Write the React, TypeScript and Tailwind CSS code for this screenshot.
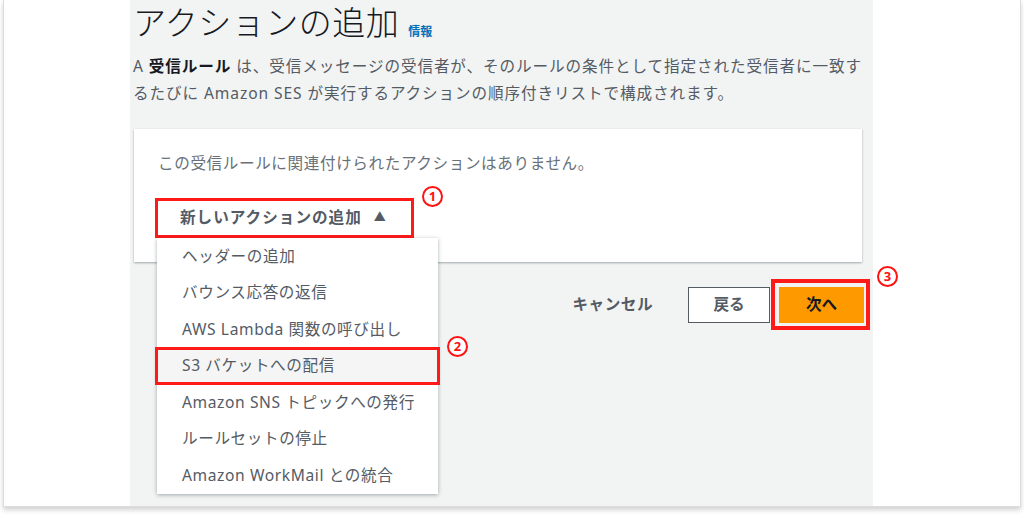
import React from "react";

const font = { fontFamily: '"Noto Sans", "Noto Sans CJK JP", sans-serif' };

function Circled({ n }: { n: string }) {
  return (
    <div className="flex h-[21px] w-[21px] items-center justify-center rounded-full border-[2px] border-[#ff1111] bg-white text-[13px] font-bold leading-none text-[#ff1111]">
      {n}
    </div>
  );
}

const items = [
  "ヘッダーの追加",
  "バウンス応答の返信",
  "AWS Lambda 関数の呼び出し",
  "S3 バケットへの配信",
  "Amazon SNS トピックへの発行",
  "ルールセットの停止",
  "Amazon WorkMail との統合",
];

export default function App() {
  return (
    <div className="h-[514px] w-[1024px] bg-white" style={font}>
      <div className="ml-[3px] flex h-[507px] w-[1018px] border border-t-0 border-[#dcdcdc] bg-white shadow-[0_3px_5px_rgba(0,0,0,0.18)]">
        <div className="w-[126px] shrink-0" />
        <div className="relative w-[743px] shrink-0 bg-[#f2f3f3] pl-[3px]">
          <div className="flex items-end pt-[3px]">
            <h1 className="text-[33px] font-light leading-[40px] tracking-[0.5px] text-[#16191f]">アクションの追加</h1>
            <a className="mb-[2px] ml-[9px] text-[12px] font-bold text-[#0073bb]">情報</a>
          </div>
          <div className="mt-[10px] w-[740px] whitespace-nowrap text-[15.6px] leading-[27px] tracking-[0.9px] text-[#545b64]">
            <div>
              A <b className="font-bold text-[#16191f]">受信ルール</b> は、受信メッセージの受信者が、そのルールの条件として指定された受信者に一致す
            </div>
            <div>るたびに Amazon SES が実行するアクションの順序付きリストで構成されます。</div>
          </div>
          <div className="relative ml-[1px] mt-[22px] h-[133px] w-[728px] bg-white shadow-[0_1px_2px_rgba(0,28,36,0.35)]">
            <p className="pl-[24px] pt-[22px] text-[15.6px] leading-[24px] tracking-[0.6px] text-[#687078]">この受信ルールに関連付けられたアクションはありません。</p>
            <div className="relative ml-[21px] mt-[23px] flex h-[40px] w-[259px] items-center border-[3px] border-[#ff1a1a] pl-[22px]">
              <span className="text-[15.6px] font-bold tracking-[1px] text-[#545b64]">新しいアクションの追加</span>
              <span className="ml-[12px] text-[12px] text-[#545b64]">▲</span>
              <div className="absolute left-[264px] top-[-15px]">
                <Circled n="1" />
              </div>
            </div>
            <div className="absolute left-[23px] top-[109px] z-10 w-[281px] bg-white shadow-[0_1px_4px_rgba(0,28,36,0.35)]">
              {items.map((t, i) =>
                i === 3 ? (
                  <div key={t} className="relative">
                    <div className="flex h-[36.5px] items-center bg-[#f5f5f5] pl-[25px] text-[15.6px] tracking-[0.6px] text-[#545b64]">{t}</div>
                    <div className="absolute left-[-2px] right-[-2px] top-[-1px] bottom-[-1px] border-[3px] border-[#ff1a1a]" />
                    <div className="absolute left-[290px] top-[-12px]">
                      <Circled n="2" />
                    </div>
                  </div>
                ) : (
                  <div key={t} className="flex h-[36.5px] items-center pl-[25px] text-[15.6px] tracking-[0.6px] text-[#545b64]">{t}</div>
                )
              )}
            </div>
          </div>
          <div className="mt-[25px] flex items-center justify-end pr-[9px]">
            <span className="text-[15.6px] font-bold tracking-[0.5px] text-[#545b64]">キャンセル</span>
            <button className="ml-[35px] flex h-[36px] w-[82px] items-center justify-center border border-[#545b64] bg-white text-[15.6px] font-bold text-[#545b64]">戻る</button>
            <div className="relative ml-[9px]">
              <button className="flex h-[36px] w-[85px] items-center justify-center bg-[#ff9900] text-[15.6px] font-bold text-[#16191f]">次へ</button>
              <div className="absolute left-[-8px] right-[-6px] top-[-8px] bottom-[-7px] border-[4px] border-[#ff1a1a]" />
              <div className="absolute left-[98px] top-[-21px]">
                <Circled n="3" />
              </div>
            </div>
          </div>
        </div>
        <div className="flex-1" />
      </div>
    </div>
  );
}
